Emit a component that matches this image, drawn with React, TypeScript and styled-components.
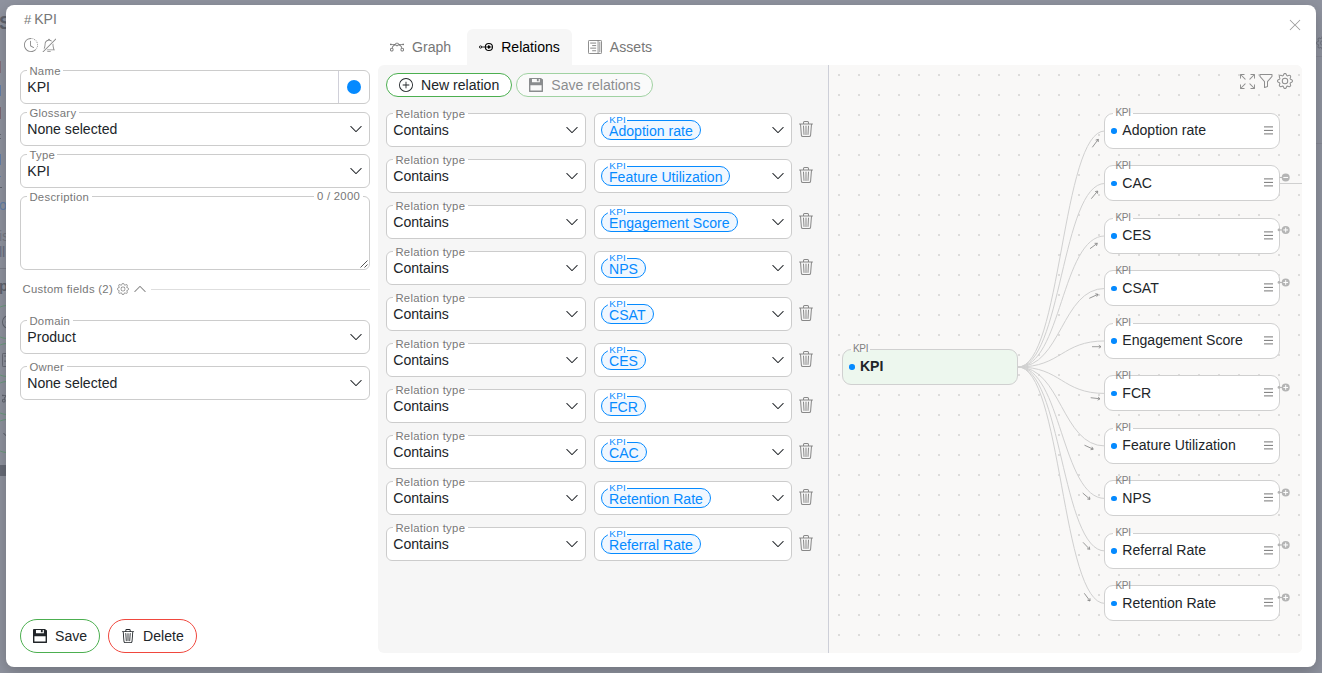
import type { ReactNode } from 'react';
import styled, { createGlobalStyle, css } from 'styled-components';
import {
  BsArrowsFullscreen,
  BsBellSlash,
  BsBezier,
  BsChevronDown,
  BsChevronUp,
  BsClockHistory,
  BsFunnel,
  BsGear,
  BsPlusCircle,
  BsTrash3,
  BsXLg,
} from 'react-icons/bs';

const colors = {
  text: '#212529',
  muted: '#777777',
  border: '#cccccc',
  blue: '#058aff',
  green: '#4caf50',
  red: '#f0483e',
  panel: '#f6f6f6',
  canvas: '#f9f8f7',
};

const GlobalStyle = createGlobalStyle`
  *, *::before, *::after {
    box-sizing: border-box;
  }

  body {
    margin: 0;
    color: ${colors.text};
    font-family: 'Liberation Sans', Arial, sans-serif;
    font-size: 14.08px;
    line-height: 16px;
  }

  button {
    font: inherit;
    color: inherit;
  }

  svg {
    display: block;
    flex: none;
  }
`;

/* Page behind the dialog */

const Page = styled.div`
  position: relative;
  display: flex;
  justify-content: space-between;
  width: 1322px;
  height: 673px;
  overflow: hidden;
  background: #8f939f;
`;

const Sidebar = styled.div`
  display: flex;
  flex-direction: column;
  width: 6px;
  overflow: hidden;
  white-space: nowrap;
  color: #5f636d;
`;

const SideText = styled.div<{ $top: number; $size?: number; $color?: string }>`
  flex: none;
  height: 16px;
  margin: ${(p) => p.$top}px 0 0 -1px;
  color: ${(p) => p.$color ?? '#5f636d'};
  font-size: ${(p) => p.$size ?? 14}px;
  font-weight: ${(p) => (p.$size ? 'bold' : 'normal')};
`;

const SideMark = styled.div<{ $top: number; $h: number; $w: number; $color: string }>`
  flex: none;
  width: ${(p) => p.$w}px;
  height: ${(p) => p.$h}px;
  margin-top: ${(p) => p.$top}px;
  background: ${(p) => p.$color};
`;

const SidePill = styled.div<{ $top?: number }>`
  display: flex;
  flex: none;
  align-items: center;
  width: 60px;
  height: 34px;
  margin: ${(p) => p.$top ?? 4}px 0 0 -10px;
  padding-left: 11px;
  border: 1px solid #6b9a7c;
  border-radius: 17px;
`;

const RightEdge = styled.div`
  display: flex;
  flex-direction: column;
  width: 6px;
  padding-top: 36px;
  overflow: hidden;
  color: #70747e;
`;

const EdgeLine = styled.div<{ $top: number }>`
  flex: none;
  height: 1px;
  margin-top: ${(p) => p.$top}px;
  background: #868995;
`;

/* Dialog */

const Dialog = styled.div`
  position: absolute;
  inset: 5px 6px 6px;
  display: flex;
  padding: 0 14px 14px;
  border-radius: 8px;
  background: #fff;
  box-shadow: 0 5px 15px rgba(0, 0, 0, 0.22);
`;

const Aside = styled.aside`
  display: flex;
  flex-direction: column;
  width: 350px;
  padding-top: 6px;
`;

const Title = styled.div`
  display: flex;
  gap: 3px;
  height: 16px;
  padding-left: 4px;
  color: ${colors.muted};
`;

const Hash = styled.span`
  font-size: 13px;
  line-height: 18px;
`;

const StatusIcons = styled.div`
  display: flex;
  gap: 4px;
  margin: 11px 0 18px;
  padding-left: 4.4px;
  color: #888;
`;

const Stack = styled.div<{ $gap: number }>`
  display: flex;
  flex-direction: column;
  gap: ${(p) => p.$gap}px;
`;

const FieldBox = styled.div<{ $height?: number; $width?: number }>`
  position: relative;
  display: flex;
  flex: none;
  align-items: center;
  justify-content: space-between;
  width: ${(p) => (p.$width ? `${p.$width}px` : '100%')};
  height: ${(p) => p.$height ?? 34}px;
  padding: 0 6px 0 6.3px;
  border: 1px solid ${colors.border};
  border-radius: 6px;
  background: #fff;
`;

/* Caption laid over the top border, interrupting only the line itself */
const captionGap = css<{ $fill?: string }>`
  background: linear-gradient(${(p) => p.$fill ?? '#fff'}, ${(p) => p.$fill ?? '#fff'}) no-repeat;
`;

const Caption = styled.span<{ $right?: boolean }>`
  ${captionGap}
  position: absolute;
  top: ${(p) => (p.$right ? -8 : -7)}px;
  ${(p) => (p.$right ? 'right: 6.5px;' : 'left: 6px;')}
  padding: 0 2.4px;
  background-position: 0 ${(p) => (p.$right ? 7 : 6)}px;
  background-size: 100% 2px;
  color: ${colors.muted};
  font-size: 11.3px;
  letter-spacing: 0.3px;
  line-height: 14px;
  white-space: nowrap;
`;

const ColorAddon = styled.div`
  display: flex;
  align-items: center;
  justify-content: center;
  width: 31px;
  height: 32px;
  margin-right: -6px;
  border-left: 1px solid #d0d0d9;
`;

const Dot = styled.span<{ $size: number }>`
  flex: none;
  width: ${(p) => p.$size}px;
  height: ${(p) => p.$size}px;
  border-radius: 50%;
  background: ${colors.blue};
`;

const ResizeGrip = styled.svg`
  align-self: flex-end;
  margin: 0 -6px 0 auto;
`;

const SectionHeader = styled.div`
  display: flex;
  align-items: center;
  height: 16px;
  margin: 11px 0 23px;
  padding-left: 2.5px;
  color: ${colors.muted};
  font-size: 11.3px;
  letter-spacing: 0.3px;
  white-space: nowrap;

  svg {
    margin-left: 4px;
    color: #888;
  }

  &::after {
    content: '';
    flex: 1;
    height: 1px;
    margin-left: 4px;
    background: #dedede;
  }
`;

const Footer = styled.div`
  display: flex;
  gap: 8px;
  margin-top: auto;
`;

const PillButton = styled.button<{ $color: string; $small?: boolean }>`
  display: flex;
  align-items: center;
  gap: 8px;
  height: ${(p) => (p.$small ? 24 : 34)}px;
  padding: 0 12px;
  border: 1px solid ${(p) => p.$color};
  border-radius: 17px;
  background: #fff;
  white-space: nowrap;

  &:disabled {
    opacity: 0.5;
  }
`;

const Main = styled.main`
  display: flex;
  flex: 1;
  flex-direction: column;
  min-width: 0;
  margin-left: 8px;
`;

const TabBar = styled.div`
  display: flex;
  align-items: flex-end;
  gap: 4px;
  height: 60px;
`;

const Tab = styled.div<{ $active?: boolean }>`
  display: flex;
  align-items: center;
  gap: 8px;
  height: 36px;
  padding: 0 12px;
  border-radius: 6px 6px 0 0;
  background: ${(p) => (p.$active ? colors.panel : 'transparent')};
  color: ${(p) => (p.$active ? '#000' : colors.muted)};
`;

const CloseButton = styled.button`
  align-self: flex-start;
  margin: 13px -0.4px 0 auto;
  padding: 0;
  border: 0;
  background: none;
  color: #999;
`;

const Panel = styled.div`
  display: flex;
  flex: 1;
  overflow: hidden;
  border-radius: 6px;
  background: ${colors.panel};
`;

const Relations = styled.section`
  width: 450px;
  padding: 8px;
`;

const Actions = styled.div`
  display: flex;
  gap: 4px;
  margin-bottom: 16px;
`;

const RelationRow = styled.div`
  display: flex;
  gap: 8px;
  color: #888;

  > div {
    color: ${colors.text};
  }

  > svg {
    margin: 8px 0 0 -1.6px;
  }
`;

const Tag = styled.span`
  position: relative;
  height: 20px;
  margin-left: -0.3px;
  padding: 1px 7px 0;
  border: 1px solid ${colors.blue};
  border-radius: 10px;
  background: #f0f7ff;
  color: ${colors.blue};
  line-height: 19px;
  white-space: nowrap;
`;

const TagCaption = styled.span`
  ${captionGap}
  position: absolute;
  top: -7px;
  left: 6px;
  padding: 0 1.3px;
  background-position: 0 5px;
  background-size: 100% 3px;
  font-size: 9.8px;
  letter-spacing: 0.3px;
  line-height: 11px;
`;

/* Graph preview */

const Canvas = styled.section`
  position: relative;
  flex: 1;
  overflow: hidden;
  border-left: 1px solid #cdcfd8;
  background: radial-gradient(circle, #dddcdb 1px, transparent 1px) 0 0 / 20px 20px ${colors.canvas};
`;

const Edges = styled.svg`
  position: absolute;
  inset: 0;
`;

const CanvasTools = styled.div`
  position: absolute;
  top: 8px;
  right: 9px;
  display: flex;
  align-items: center;
  gap: 3px;
  color: #8e8e8e;
`;

const Node = styled.div<{ $root?: boolean }>`
  position: absolute;
  display: flex;
  align-items: center;
  width: 176px;
  height: 36px;
  padding: 0 6px;
  border: 1px solid #d0d0d0;
  border-radius: 9px;
  background: ${(p) => (p.$root ? '#edf7ee' : '#fff')};
  font-weight: ${(p) => (p.$root ? 'bold' : 'normal')};

  > svg {
    margin-top: -1px;
  }
`;

const NodeName = styled.span`
  flex: 1;
  margin: -1.6px 0 0 5.4px;
  white-space: nowrap;
`;

const NodeCaption = styled.span`
  ${captionGap}
  position: absolute;
  top: -6.9px;
  left: 8px;
  padding: 0 2px;
  background-position: 0 6px;
  background-size: 100% 2px;
  color: #808080;
  font-size: 10px;
  font-weight: normal;
  letter-spacing: -0.3px;
  line-height: 12px;
`;

function SaveIcon() {
  return (
    <svg width="14" height="14" viewBox="0 0 16 16" fill="currentColor">
      <path
        fillRule="evenodd"
        d="M1 0h12.6L16 1.8V15a1 1 0 0 1-1 1H1a1 1 0 0 1-1-1V1a1 1 0 0 1 1-1zM3.4 1.1v3.8h9V1.1h-1.3v2.5H9V1.1zM1.6 8.3v5.9h12.8V8.3z"
      />
    </svg>
  );
}

function RelationsIcon() {
  return (
    <svg width="14" height="14" viewBox="0 0 16 16" fill="none" stroke="currentColor">
      <circle cx="1.8" cy="8" r="1.3" />
      <path d="M3.1 8h11.5M11.2 5.8v4.4" />
      <circle cx="11.3" cy="8" r="4.1" strokeWidth="1.2" />
      <circle cx="11.3" cy="8" r="1.1" fill="currentColor" />
    </svg>
  );
}

function AssetsIcon() {
  return (
    <svg width="14" height="14" viewBox="0 0 16 16" fill="none" stroke="currentColor">
      <rect x=".5" y=".5" width="15" height="15" rx="1" />
      <path d="M11.5.5v15M13.5 2v12" strokeWidth=".9" />
      <path d="M2.5 3.5h6.8M4.8 6.4h4.5M2.5 9.3h6.8M4.8 12.3h4.5" />
    </svg>
  );
}

interface FieldProps {
  label: string;
  width?: number;
  children: ReactNode;
}

function SelectField({ label, width, children }: FieldProps) {
  return (
    <FieldBox $width={width}>
      {label && <Caption>{label}</Caption>}
      {children}
      <BsChevronDown size={14} />
    </FieldBox>
  );
}

const relations = [
  'Adoption rate',
  'Feature Utilization',
  'Engagement Score',
  'NPS',
  'CSAT',
  'CES',
  'FCR',
  'CAC',
  'Retention Rate',
  'Referral Rate',
];

interface GraphNode {
  name: string;
  toggle?: 'plus' | 'minus';
  // start and end of the direction arrow, in canvas coordinates
  arrow: [number, number, number, number];
}

const graphNodes: GraphNode[] = [
  { name: 'Adoption rate', arrow: [263.3, 82.3, 269.3, 74.3] },
  { name: 'CAC', toggle: 'minus', arrow: [262.3, 133.7, 268.7, 126] },
  { name: 'CES', toggle: 'plus', arrow: [261, 183.7, 268.3, 178.3] },
  { name: 'CSAT', toggle: 'plus', arrow: [260.3, 233.3, 269, 229.3] },
  { name: 'Engagement Score', arrow: [263, 281.7, 272, 281.7] },
  { name: 'FCR', toggle: 'plus', arrow: [261.7, 332.7, 271, 333.8] },
  { name: 'Feature Utilization', arrow: [255.5, 380.2, 264.2, 384.2] },
  { name: 'NPS', toggle: 'plus', arrow: [253.7, 428, 261, 434.3] },
  { name: 'Referral Rate', toggle: 'plus', arrow: [254, 477.3, 260.7, 484.3] },
  { name: 'Retention Rate', toggle: 'plus', arrow: [255.3, 528.3, 261, 536] },
];

const nodeTop = (i: number) => 47.95 + i * 52.5;

function Arrow({ points }: { points: [number, number, number, number] }) {
  const [x1, y1, x2, y2] = points;
  const length = Math.hypot(x2 - x1, y2 - y1);
  const angle = (Math.atan2(y2 - y1, x2 - x1) * 180) / Math.PI;
  return (
    <path
      transform={`translate(${x1} ${y1}) rotate(${angle})`}
      d={`M0 0H${length}M${length - 2.2} -1.6L${length} 0L${length - 2.2} 1.6`}
      stroke="#888"
      strokeWidth="0.8"
    />
  );
}

function Graph() {
  return (
    <Canvas>
      <Edges width="473" height="588" fill="none">
        {graphNodes.map(({ name, arrow }, i) => {
          const y = nodeTop(i) + 18;
          return (
            <g key={name}>
              <path d={`M189 302C232.5 302 232.5 ${y} 276 ${y}`} stroke="#d0d0d0" />
              <Arrow points={arrow} />
            </g>
          );
        })}
        <path d="M451 118.5H473" stroke="#d0d0d0" />
      </Edges>
      <Node $root style={{ left: 13, top: 284 }}>
        <NodeCaption $fill={colors.canvas}>KPI</NodeCaption>
        <Dot $size={5.5} />
        <NodeName>KPI</NodeName>
      </Node>
      {graphNodes.map(({ name }, i) => (
        <Node key={name} style={{ left: 275.4, top: nodeTop(i) }}>
          <NodeCaption>KPI</NodeCaption>
          <Dot $size={5.5} />
          <NodeName>{name}</NodeName>
          <svg width="9" height="9" stroke="#777">
            <path d="M0 .9h9M0 4.4h9M0 7.9h9" />
          </svg>
        </Node>
      ))}
      <Edges width="473" height="588">
        {graphNodes.map(({ name, toggle }, i) => {
          if (!toggle) return null;
          return (
            <g key={name} transform={`translate(456.7 ${nodeTop(i) + 12})`}>
              {toggle === 'plus' && <circle cx="-6.7" r="1.4" fill="#b4b4b4" />}
              <path d="M-6 0h3" stroke="#b4b4b4" />
              <circle r="4" fill="#b4b4b4" />
              <path d={toggle === 'plus' ? 'M-2.4 0h4.8M0 -2.4v4.8' : 'M-2.4 0h4.8'} stroke="#fff" />
            </g>
          );
        })}
      </Edges>
      <CanvasTools>
        <BsArrowsFullscreen size={15} />
        <BsFunnel size={16} />
        <BsGear size={16} />
      </CanvasTools>
    </Canvas>
  );
}

export default function App() {
  return (
    <Page>
      <GlobalStyle />
      <Sidebar>
        <SideText $top={15} $size={18}>Se</SideText>
        <SideMark $top={30} $w={1} $h={12} $color="#85707d" />
        <SideMark $top={12} $w={1} $h={11} $color="#647fa8" />
        <SideMark $top={11} $w={1} $h={12} $color="#7d6874" />
        <SideMark $top={15} $w={1} $h={1} $color="#666a74" />
        <SideMark $top={3} $w={1} $h={1} $color="#666a74" />
        <SideMark $top={15} $w={1} $h={11} $color="#647fa8" />
        <SideMark $top={11} $w={1} $h={1} $color="#647fa8" />
        <SideMark $top={10} $w={2} $h={1} $color="#5f636d" />
        <SideText $top={9} $color="#647fa8">o</SideText>
        <SideText $top={15} $color="#777a84">is</SideText>
        <SideText $top={0} $color="#6b6e80">ll</SideText>
        <SideMark $top={8} $w={6} $h={1} $color="#7c7f8a" />
        <SideText $top={9} $size={15}>p</SideText>
        <SidePill $top={11}><BsPlusCircle size={14} /></SidePill>
        <SidePill><AssetsIcon /></SidePill>
        <SidePill><BsBezier size={14} /></SidePill>
        <SidePill><BsChevronDown size={14} /></SidePill>
        <SideMark $top={12} $w={6} $h={11} $color="#676b77" />
      </Sidebar>
      <RightEdge>
        <BsGear size={14} />
        <EdgeLine $top={6} />
        <EdgeLine $top={86} />
      </RightEdge>

      <Dialog role="dialog">
        <Aside>
          <Title>
            <Hash>#</Hash>
            <span>KPI</span>
          </Title>
          <StatusIcons>
            <BsClockHistory size={14} />
            <BsBellSlash size={14} />
          </StatusIcons>
          <Stack $gap={8}>
            <FieldBox>
              <Caption>Name</Caption>
              <span>KPI</span>
              <ColorAddon>
                <Dot $size={14} />
              </ColorAddon>
            </FieldBox>
            <SelectField label="Glossary">None selected</SelectField>
            <SelectField label="Type">KPI</SelectField>
            <FieldBox $height={74}>
              <Caption>Description</Caption>
              <Caption $right>0 / 2000</Caption>
              <ResizeGrip width="9" height="9" stroke="#555">
                <path d="M0.5 7.5L7.5 0.5M4.5 7.5L7.5 4.5" />
              </ResizeGrip>
            </FieldBox>
          </Stack>
          <SectionHeader>
            Custom fields (2)
            <BsGear size={12} />
            <BsChevronUp size={14} />
          </SectionHeader>
          <Stack $gap={12}>
            <SelectField label="Domain">Product</SelectField>
            <SelectField label="Owner">None selected</SelectField>
          </Stack>
          <Footer>
            <PillButton $color={colors.green}>
              <SaveIcon />
              Save
            </PillButton>
            <PillButton $color={colors.red}>
              <BsTrash3 size={14} />
              Delete
            </PillButton>
          </Footer>
        </Aside>

        <Main>
          <TabBar>
            <Tab>
              <BsBezier size={14} />
              Graph
            </Tab>
            <Tab $active>
              <RelationsIcon />
              Relations
            </Tab>
            <Tab>
              <AssetsIcon />
              Assets
            </Tab>
            <CloseButton aria-label="Close">
              <BsXLg size={14} />
            </CloseButton>
          </TabBar>
          <Panel>
            <Relations>
              <Actions>
                <PillButton $small $color={colors.green}>
                  <BsPlusCircle size={14} />
                  New relation
                </PillButton>
                <PillButton $small $color={colors.green} disabled>
                  <SaveIcon />
                  Save relations
                </PillButton>
              </Actions>
              <Stack $gap={12}>
                {relations.map((name) => (
                  <RelationRow key={name}>
                    <SelectField label="Relation type" width={200}>Contains</SelectField>
                    <SelectField label="" width={198}>
                      <Tag>
                        <TagCaption>KPI</TagCaption>
                        {name}
                      </Tag>
                    </SelectField>
                    <BsTrash3 size={16} />
                  </RelationRow>
                ))}
              </Stack>
            </Relations>
            <Graph />
          </Panel>
        </Main>
      </Dialog>
    </Page>
  );
}
